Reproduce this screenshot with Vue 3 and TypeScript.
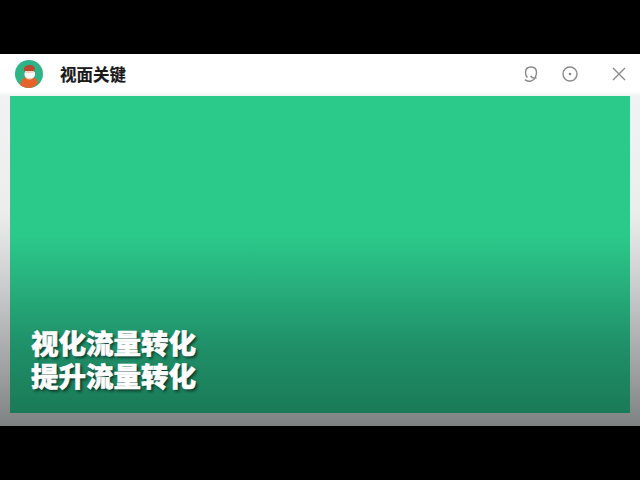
<script setup lang="ts">
const title = '视面关键'
const lines = ['视化流量转化', '提升流量转化']
</script>

<template>
  <div class="stage">
    <div class="window">
      <header class="titlebar">
        <svg class="logo" viewBox="0 0 28 28" width="28" height="28">
          <circle cx="14" cy="14" r="14" fill="#2fb487" />
          <path d="M5 25c.5-4 3-7 6-8l9 1c1.500 1 2.500 3 3 5-2.500 3-6 5-9 5-3.500 0-6.500-1-9-3z" fill="#e4622c" />
          <path d="M9 10c-.5-3.500 2.500-5 5.500-5 3 0 5.500 1.500 5.500 4l-1 2-9 1z" fill="#b9492f" />
          <path d="M10 11h9v5c0 2-2 3.500-4.500 3.500S10 18 10 16z" fill="#f4d3bf" />
          <path d="M9.500 12.500c3 1 6.500 1 10.500-.5v3c0 2-2 3-5 3s-5.500-1.500-5.500-3z" fill="#fff" />
        </svg>
        <span class="title">{{ title }}</span>
        <div class="actions">
          <svg viewBox="0 0 16 18" width="16" height="18" class="icon">
            <path d="M4.500 12.500C3 11 2.500 9.500 2.500 7.500 2.500 4 4.800 2 8 2s5.500 2 5.500 5.500c0 2-.5 3.500-1.500 5" />
            <path d="M13.500 12.500c-2 1-4.500.5-6-1.500M2 14.500c1 1.500 3.500 2 6 1.500 2-.5 3.500-1.500 4.500-3.500" />
          </svg>
          <svg viewBox="0 0 16 16" width="16" height="16" class="icon">
            <circle cx="8" cy="8" r="7" />
            <circle cx="8" cy="8" r="1.300" class="dot" />
          </svg>
          <svg viewBox="0 0 14 14" width="14" height="14" class="icon close">
            <path d="M1 1l12 12M13 1L1 13" />
          </svg>
        </div>
      </header>
      <main class="body">
        <div class="panel">
          <div class="caption">
            <div v-for="line in lines" :key="line">{{ line }}</div>
          </div>
        </div>
      </main>
    </div>
  </div>
</template>

<style>
html, body { margin: 0; background: #000; }
</style>

<style scoped>
.stage {
  width: 640px;
  height: 480px;
  background: #000;
  display: flex;
  flex-direction: column;
  justify-content: center;
  overflow: hidden;
}
.window {
  height: 372px;
  display: flex;
  flex-direction: column;
  background: #fff;
}
.titlebar {
  height: 42px;
  flex: none;
  display: flex;
  align-items: center;
  padding: 0 14px 3px 15px;
  background: linear-gradient(180deg, #ffffff 0%, #ffffff 88%, #f1f3f3 100%);
  box-sizing: border-box;
}
.logo { flex: none; filter: blur(0.4px); }
.title {
  margin-left: 17px;
  font-family: "Noto Sans CJK SC", sans-serif;
  font-size: 16.500px;
  font-weight: 700;
  color: #1a1a1a;
  -webkit-text-stroke: 0.2px #1a1a1a;
}
.actions {
  margin-left: auto;
  display: flex;
  align-items: center;
  gap: 23px;
  filter: blur(0.4px);
}
.icon {
  fill: none;
  stroke: #8a8a8a;
  stroke-width: 1.400;
}
.dot { fill: #8a8a8a; stroke: none; }
.close { margin-left: 11px; }
.body {
  flex: 1;
  padding: 0 10px 13px;
  background: linear-gradient(180deg, #f1f2f3 0%, #eceded 35%, #cfd0d1 55%, #a4a6a7 80%, #7f8282 100%);
  display: flex;
}
.panel {
  flex: 1;
  display: flex;
  align-items: flex-end;
  background: linear-gradient(180deg, #2bc98a 0%, #2bc98a 44%, #28b27e 58%, #20916a 78%, #1a7a57 100%);
}
.caption {
  padding: 0 0 21px 21px;
  font-family: "Noto Sans CJK SC", sans-serif;
  font-size: 27.500px;
  font-weight: 900;
  line-height: 33px;
  color: #fff;
  -webkit-text-stroke: 0.5px #fff;
  text-shadow: 2px 2px 3px rgba(0, 0, 0, 0.6);
}
</style>
